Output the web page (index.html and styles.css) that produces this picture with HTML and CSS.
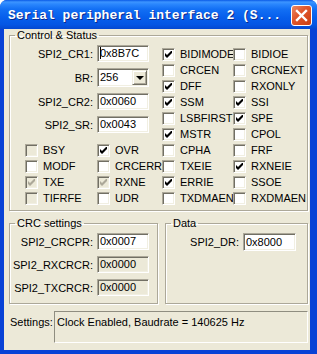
FILE: index.html
```html
<!DOCTYPE html>
<html lang="en">
<head>
    <meta charset="UTF-8">
    <title>Serial peripheral interface 2</title>
    <link rel="stylesheet" href="styles.css">
</head>
<body>
<div class="window">
    <div class="titlebar">
        <div class="title">Serial peripheral interface 2 (S...</div>
        <div class="close">
            <svg width="13" height="13" viewBox="0 0 13 13"><path d="M2 2L11 11M11 2L2 11" stroke="#fff" stroke-width="2.4" stroke-linecap="square"/></svg>
        </div>
    </div>

    <div class="frame">
        <div class="client">

            <!-- Control & Status -->
            <fieldset class="group control">
                <legend>Control &amp; Status</legend>
                <div class="control-grid">
                    <div class="left-col">
                        <div class="regs">
                            <div class="reg"><label>SPI2_CR1:</label><div class="edit"><span class="caret"></span>0x8B7C</div></div>
                            <div class="reg"><label>BR:</label>
                                <div class="edit combo"><span>256</span><span class="drop"><span class="arrow"></span></span></div>
                            </div>
                            <div class="reg"><label>SPI2_CR2:</label><div class="edit">0x0060</div></div>
                            <div class="reg"><label>SPI2_SR:</label><div class="edit">0x0043</div></div>
                        </div>
                        <div class="flags">
                            <div class="cb"><span class="box off"></span>BSY</div>
                            <div class="cb"><span class="box"><svg class="tick" viewBox="0 0 7 7"><path d="M0 2L2 4L7 -1V2L2 7L0 5Z"/></svg></span>OVR</div>
                            <div class="cb"><span class="box"></span>MODF</div>
                            <div class="cb"><span class="box"></span>CRCERR</div>
                            <div class="cb"><span class="box off"><svg class="tick" viewBox="0 0 7 7"><path d="M0 2L2 4L7 -1V2L2 7L0 5Z"/></svg></span>TXE</div>
                            <div class="cb"><span class="box off"><svg class="tick" viewBox="0 0 7 7"><path d="M0 2L2 4L7 -1V2L2 7L0 5Z"/></svg></span>RXNE</div>
                            <div class="cb"><span class="box off"></span>TIFRFE</div>
                            <div class="cb"><span class="box"></span>UDR</div>
                        </div>
                    </div>

                    <div class="bits">
                        <div class="cb"><span class="box"><svg class="tick" viewBox="0 0 7 7"><path d="M0 2L2 4L7 -1V2L2 7L0 5Z"/></svg></span>BIDIMODE</div>
                        <div class="cb"><span class="box"></span>BIDIOE</div>
                        <div class="cb"><span class="box"></span>CRCEN</div>
                        <div class="cb"><span class="box"></span>CRCNEXT</div>
                        <div class="cb"><span class="box"><svg class="tick" viewBox="0 0 7 7"><path d="M0 2L2 4L7 -1V2L2 7L0 5Z"/></svg></span>DFF</div>
                        <div class="cb"><span class="box"></span>RXONLY</div>
                        <div class="cb"><span class="box"><svg class="tick" viewBox="0 0 7 7"><path d="M0 2L2 4L7 -1V2L2 7L0 5Z"/></svg></span>SSM</div>
                        <div class="cb"><span class="box"><svg class="tick" viewBox="0 0 7 7"><path d="M0 2L2 4L7 -1V2L2 7L0 5Z"/></svg></span>SSI</div>
                        <div class="cb"><span class="box"></span>LSBFIRST</div>
                        <div class="cb"><span class="box"><svg class="tick" viewBox="0 0 7 7"><path d="M0 2L2 4L7 -1V2L2 7L0 5Z"/></svg></span>SPE</div>
                        <div class="cb"><span class="box"><svg class="tick" viewBox="0 0 7 7"><path d="M0 2L2 4L7 -1V2L2 7L0 5Z"/></svg></span>MSTR</div>
                        <div class="cb"><span class="box"></span>CPOL</div>
                        <div class="cb"><span class="box"></span>CPHA</div>
                        <div class="cb"><span class="box"></span>FRF</div>
                        <div class="cb"><span class="box"></span>TXEIE</div>
                        <div class="cb"><span class="box"><svg class="tick" viewBox="0 0 7 7"><path d="M0 2L2 4L7 -1V2L2 7L0 5Z"/></svg></span>RXNEIE</div>
                        <div class="cb"><span class="box"><svg class="tick" viewBox="0 0 7 7"><path d="M0 2L2 4L7 -1V2L2 7L0 5Z"/></svg></span>ERRIE</div>
                        <div class="cb"><span class="box"></span>SSOE</div>
                        <div class="cb"><span class="box"></span>TXDMAEN</div>
                        <div class="cb"><span class="box"></span>RXDMAEN</div>
                    </div>
                </div>
            </fieldset>

            <div class="lower">
                <!-- CRC settings -->
                <fieldset class="group crc">
                    <legend>CRC settings</legend>
                    <div class="regs tight">
                        <div class="reg"><label>SPI2_CRCPR:</label><div class="edit">0x0007</div></div>
                        <div class="reg"><label>SPI2_RXCRCR:</label><div class="edit ro">0x0000</div></div>
                        <div class="reg"><label>SPI2_TXCRCR:</label><div class="edit ro">0x0000</div></div>
                    </div>
                </fieldset>

                <!-- Data -->
                <fieldset class="group data">
                    <legend>Data</legend>
                    <div class="regs tight">
                        <div class="reg"><label>SPI2_DR:</label><div class="edit wide">0x8000</div></div>
                    </div>
                </fieldset>
            </div>

            <div class="settings">
                <label>Settings:</label>
                <div class="static">Clock Enabled, Baudrate = 140625 Hz</div>
            </div>
        </div>
    </div>
</div>
</body>
</html>
```
FILE: styles.css
```css
body {
    margin: 0;
    font-family: "Liberation Sans", Arial, sans-serif;
    font-size: 11px;
    color: #000;
    background-color: #fff;
}

/* Window frame */
.window {
    width: 317px;
    height: 354px;
    display: flex;
    flex-direction: column;
    background-color: #0842d6;
    border-radius: 7px 7px 0 0;
    overflow: hidden;
}

.titlebar {
    height: 29px;
    flex: none;
    display: flex;
    align-items: center;
    padding: 0 5px 0 8px;
    background: linear-gradient(#0a5ae6 0%, #3d95ff 7%, #2b87fd 14%, #126ff4 32%, #075fec 60%, #0556e4 85%, #0548d0 100%);
}

.title {
    flex: 1;
    color: #fff;
    font-family: "Liberation Mono", "Courier New", monospace;
    font-weight: bold;
    font-size: 13px;
    white-space: nowrap;
    text-shadow: 1px 1px 0 #0c2a8c;
    padding-top: 1px;
}

.close {
    width: 21px;
    height: 21px;
    margin-top: 1px;
    box-sizing: border-box;
    border: 1px solid #fff;
    border-radius: 3px;
    background: linear-gradient(135deg, #e98a66 0%, #e0582e 40%, #cc3e12 100%);
    display: flex;
    align-items: center;
    justify-content: center;
}

.frame {
    flex: 1;
    display: flex;
    padding: 0 7px 4px 4px;
}

.client {
    flex: 1;
    background-color: #ece9d8;
}

/* Group boxes */
.group {
    margin: 0;
    padding: 0;
    min-width: 0;
    box-sizing: border-box;
    border: 1px solid #aca899;
    box-shadow: inset 1px 1px 0 #fff, 1px 1px 0 #fff;
}

.group legend {
    padding: 0 2px;
    margin-left: 5px;
    line-height: 13px;
}

.control {
    width: 299px;
    margin-left: 5px;
    padding: 3px 0 2px 0;
}

.control-grid {
    display: grid;
    grid-template-columns: 152px 1fr;
}

/* Register rows */
.regs {
    display: flex;
    flex-direction: column;
    gap: 6px;
    height: 99px;
}

.regs.tight {
    height: auto;
}

.reg {
    display: flex;
    align-items: center;
}

.reg label {
    width: 83px;
    margin-right: 4px;
    text-align: right;
    white-space: nowrap;
}

.edit {
    width: 52px;
    height: 17px;
    box-sizing: border-box;
    padding-left: 2px;
    line-height: 15px;
    background-color: #fff;
    border: 1px solid;
    border-color: #aca899 #fff #fff #aca899;
    box-shadow: inset 1px 1px 0 #716f64, inset -1px -1px 0 #f1efe2;
    white-space: nowrap;
}

.edit.ro {
    background-color: #ece9d8;
}

.edit.wide {
    width: 53px;
    height: 18px;
    line-height: 16px;
}

.caret {
    display: inline-block;
    width: 1px;
    height: 12px;
    vertical-align: -2px;
    background-color: #000;
    margin-right: -1px;
}

.combo {
    height: 19px;
    display: flex;
    align-items: center;
    justify-content: space-between;
    padding-right: 1px;
}

.drop {
    width: 15px;
    height: 15px;
    box-sizing: border-box;
    background-color: #ece9d8;
    border: 1px solid;
    border-color: #f1efe2 #716f64 #716f64 #f1efe2;
    box-shadow: inset 1px 1px 0 #fff, inset -1px -1px 0 #aca899;
    display: flex;
    align-items: center;
    justify-content: center;
}

.arrow {
    width: 0;
    height: 0;
    border-left: 4px solid transparent;
    border-right: 4px solid transparent;
    border-top: 4px solid #000;
    margin-top: 1px;
}

/* Checkboxes */
.flags {
    display: grid;
    grid-template-columns: 72px 1fr;
    padding-left: 15px;
}

.bits {
    display: grid;
    grid-template-columns: 71px 1fr;
    padding-top: 3px;
}

.cb {
    height: 16px;
    display: flex;
    align-items: flex-start;
    line-height: 13px;
    white-space: nowrap;
}

.box {
    width: 13px;
    height: 13px;
    flex: none;
    box-sizing: border-box;
    margin-right: 5px;
    background-color: #fff;
    border: 1px solid;
    border-color: #aca899 #fff #fff #aca899;
    box-shadow: inset 1px 1px 0 #716f64, inset -1px -1px 0 #f1efe2;
    display: flex;
    align-items: center;
    justify-content: center;
}

.tick {
    width: 7px;
    height: 7px;
    fill: #000;
}

.box.off {
    background-color: #ece9d8;
}

.box.off .tick {
    fill: #aca899;
}

/* Lower groups */
.lower {
    display: flex;
    gap: 7px;
    margin: 6px 0 0 5px;
}

.crc {
    width: 149px;
    height: 87px;
    padding-top: 3px;
}

.data {
    width: 143px;
    height: 87px;
    padding-top: 3px;
}

.data .reg label {
    width: 73px;
}

/* Settings line */
.settings {
    display: flex;
    margin-top: 7px;
}

.settings label {
    width: 44px;
    margin: 5px 0 0 6px;
    line-height: 13px;
}

.static {
    width: 254px;
    height: 32px;
    box-sizing: border-box;
    padding: 4px 0 0 2px;
    line-height: 13px;
    border: 1px solid;
    border-color: #8f8d80 #fff #fff #8f8d80;
    white-space: nowrap;
}
```
